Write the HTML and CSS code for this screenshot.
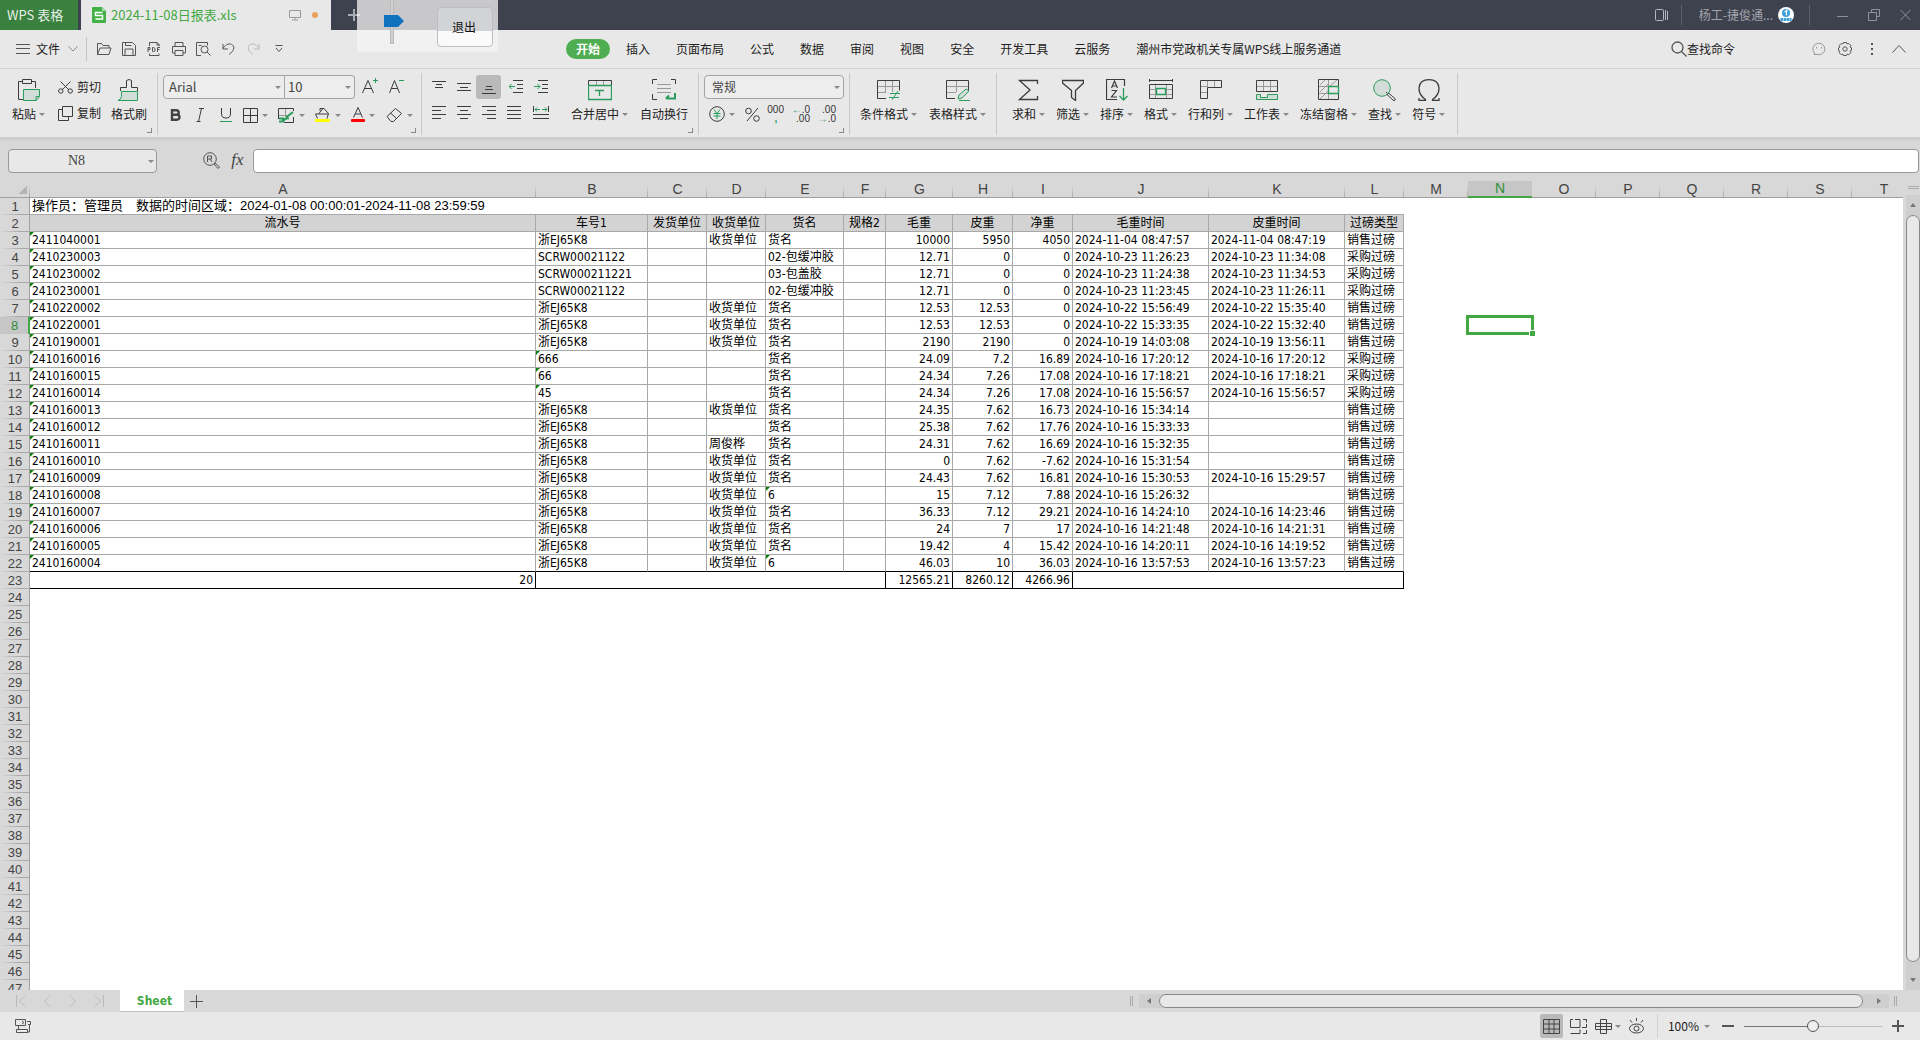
FILE: index.html
```
<!DOCTYPE html>
<html lang="zh-CN">
<head>
<meta charset="utf-8">
<title>2024-11-08日报表.xls - WPS 表格</title>
<link rel="stylesheet" href="styles.css">
</head>
<body>
<header class="titlebar">
  <button class="home-tab">WPS 表格</button>
  <div class="doc-tab">
    <svg class="doc-logo" width="14" height="16" viewBox="0 0 14 16"><path d="M1 0h9l4 4v11a1 1 0 0 1-1 1H1a1 1 0 0 1-1-1V1a1 1 0 0 1 1-1z" fill="#43b244"/><path d="M10 0l4 4h-4z" fill="#a5dba5"/><path d="M10.500 5.500h-7v3h7v3.500h-7" fill="none" stroke="#fff" stroke-width="1.500"/></svg>
    <span class="doc-name">2024-11-08日报表.xls</span>
    <svg width="12" height="12" viewBox="0 0 12 12" fill="none" stroke="#999"><path d="M.5 1.500h11v7H.5zM6 8.500v2M3 11h6"/></svg>
    <span class="unsaved"></span>
  </div>
  <button class="new-tab" aria-label="新建"><svg width="12" height="12" viewBox="0 0 12 12" stroke="#a9abb2" stroke-width="2"><path d="M6 0v12M0 6h12"/></svg></button>
  <div class="window-tools">
    <button aria-label="窗口布局"><svg width="14" height="12" viewBox="0 0 14 12" fill="none" stroke="#b5b7bd"><rect x=".5" y=".5" width="8" height="11" rx="1"/><path d="M10.500 1v10M12.500 2v9"/></svg></button>
    <i class="bar"></i>
    <a class="user" href="#">杨工-捷俊通...</a>
    <svg width="16" height="16" viewBox="0 0 16 16"><circle cx="8" cy="8" r="8" fill="#fff"/><circle cx="8" cy="6" r="4" fill="#3a9fd8"/><path d="M8.500 2.500v6M6.500 5l3-1.500" stroke="#fff" stroke-width="1.200"/><path d="M2.500 12.500h11" stroke="#3a9fd8" stroke-width="3" stroke-dasharray="2.500 .5"/></svg>
    <i class="bar bar-wide"></i>
    <button aria-label="最小化"><svg width="11" height="12" viewBox="0 0 11 12" stroke="#8f929b"><path d="M0 7.500h11"/></svg></button>
    <button aria-label="还原"><svg width="12" height="12" viewBox="0 0 12 12" fill="none" stroke="#8f929b"><path d="M.5 3.500h8v8h-8zM3.500 3V.5h8v7H9"/></svg></button>
    <button aria-label="关闭"><svg width="11" height="12" viewBox="0 0 11 12" stroke="#8f929b"><path d="M.5 1l10 10M10.500 1l-10 10"/></svg></button>
  </div>
</header>

<aside class="float-panel">
  <i class="float-track"></i>
  <svg class="float-thumb" width="20" height="12" viewBox="0 0 20 12"><path d="M0 0h14l6 6-6 6H0z" fill="#1071bd"/></svg>
  <button class="float-exit">退出</button>
</aside>

<nav class="menubar">
  <button class="file-menu"><svg width="14" height="10" viewBox="0 0 14 10" stroke="#555"><path d="M0 .5h14M0 4.500h14M0 9.500h14"/></svg>文件<svg class="chev" width="10" height="6" viewBox="0 0 10 6" fill="none" stroke="#888"><path d="M.5.5L5 5 9.500.5"/></svg></button>
  <div class="quick">
    <button aria-label="打开"><svg width="16" height="14" viewBox="0 0 16 14"><path d="M1.500 12.500v-11h4l1.500 2h6v2.500M1.500 12.500L4 6h11l-2 6.500z"/></svg></button>
    <button aria-label="保存"><svg width="14" height="14" viewBox="0 0 14 14"><path d="M.5.5h10l3 3v10H.5zM3 13V7h8v6M3.500.5v3h6"/></svg></button>
    <button aria-label="输出为PDF"><svg width="14" height="14" viewBox="0 0 14 14"><path d="M2.500 4V.5h7.500l2 2V4M10 .5V3h2.500M2.500 11.500v2h9.500v-2"/><path d="M1 10V5.500h2v2H1M5.500 5.500h1L8 6.500V9l-1.500.5h-1zM10.500 10V5.500H13M10.500 7.500h2"/></svg></button>
    <button aria-label="打印"><svg width="14" height="14" viewBox="0 0 14 14"><path d="M3 4.500v-4h8v4M3 11H.5V4.500h13V11H11M3 8.500h8v5H3z"/></svg></button>
    <button aria-label="打印预览"><svg width="15" height="14" viewBox="0 0 15 14"><path d="M5 13.500H.5V.5h11v3M2.500 3.500h3"/><circle cx="8.500" cy="7.500" r="3.500"/><path d="M11 10l3.500 3.500"/></svg></button>
    <button aria-label="撤销"><svg width="13" height="14" viewBox="0 0 13 14"><path d="M1 2v5h5M1 6.500C4 1.500 8 1 10.500 3s1.500 6-3.500 9.500"/></svg></button>
    <button aria-label="恢复" class="faded"><svg width="13" height="14" viewBox="0 0 13 14"><path d="M12 2v5H7M12 6.500C9 1.500 5 1 2.500 3S1 9 6 12.500"/></svg></button>
    <button aria-label="更多"><svg width="8" height="8" viewBox="0 0 8 8"><path d="M.5.500h7M1 3l3 3.500L7 3"/></svg></button>
  </div>
  <div class="tabs">
    <button class="on">开始</button><button>插入</button><button>页面布局</button><button>公式</button><button>数据</button><button>审阅</button><button>视图</button><button>安全</button><button>开发工具</button><button>云服务</button><button>潮州市党政机关专属WPS线上服务通道</button>
  </div>
  <div class="menu-right">
    <button class="find-cmd"><svg width="16" height="16" viewBox="0 0 16 16" fill="none" stroke="#555" stroke-width="1.300"><circle cx="6.500" cy="6.500" r="5.500"/><path d="M10.500 10.500l5 5"/></svg>查找命令</button>
    <button aria-label="反馈"><svg width="14" height="14" viewBox="0 0 14 14" fill="none" stroke="#999"><path d="M2 12.500L2.500 11A6 5.800 0 1 1 5 12.500z"/><path d="M4.500 5v1.500M9.500 5v1.500"/></svg></button>
    <button aria-label="设置"><svg width="16" height="16" viewBox="0 0 16 16" fill="none" stroke="#555"><circle cx="8" cy="8" r="2.200"/><path d="M6.500 1.500h3l.6 1.500 1.700-.5 2 2-.7 1.600 1.400.7v2.500l-1.400.7.7 1.700-2 2-1.700-.6-.6 1.400h-3l-.6-1.400-1.700.6-2-2 .7-1.700L1.500 9.300V6.800l1.400-.7-.7-1.600 2-2 1.700.5z"/></svg></button>
    <button aria-label="更多选项"><svg width="2" height="12" viewBox="0 0 2 12" fill="#555"><path d="M0 0h2v2H0zM0 5h2v2H0zM0 10h2v2H0z"/></svg></button>
    <button aria-label="收起功能区"><svg width="14" height="8" viewBox="0 0 14 8" fill="none" stroke="#555"><path d="M.5 7.500l6.500-7 6.500 7"/></svg></button>
  </div>
</nav>

<section class="ribbon">
  <div class="group g-clip">
    <button class="big"><svg width="22" height="22" viewBox="0 0 22 22"><path class="k" d="M4 2.500H.5v18H5M14 2.500h3.500V9M4.500.5h9v4h-9z"/><path class="gf" d="M5.500 10.500h16v7l-3 4h-13z"/><path class="g" d="M21 17.500h-3V21"/></svg><span>粘贴<i class="caret"></i></span></button>
    <div class="pair">
      <button><svg width="15" height="13" viewBox="0 0 15 13"><path class="k" d="M2.500.5L11 9M12.500.5L4 9"/><circle class="k" cx="2.800" cy="10" r="2.200"/><circle class="k" cx="12.200" cy="10" r="2.200"/></svg>剪切</button>
      <button><svg width="15" height="15" viewBox="0 0 15 15"><path class="k" d="M4.500.5h10v10h-10zM4 3.500H.5v11h10V11"/></svg>复制</button>
    </div>
    <button class="big"><svg width="22" height="22" viewBox="0 0 22 22"><path class="k" d="M2.500 12V8.500h6V1.500q2.500-2 5 0v7h6V12"/><path class="gf" d="M3.500 12.500h16v9H0q3-1 3.500-4z"/></svg><span>格式刷</span></button>
    <i class="corner"></i>
  </div>
  <div class="group g-font">
    <div class="line">
      <label class="pick pick-font"><select aria-label="字体"><option>Arial</option></select><i class="caret"></i></label><label class="pick pick-size"><select aria-label="字号"><option>10</option></select><i class="caret"></i></label>
      <button class="grow" aria-label="增大字号"><svg width="17" height="16" viewBox="0 0 17 16"><path class="k" d="M.5 15L6 2.500 11.500 15M2.500 10.500h7"/><path class="g" d="M13.500 0v5M11 2.500h5"/></svg></button>
      <button class="shrink" aria-label="减小字号"><svg width="16" height="16" viewBox="0 0 16 16"><path class="k" d="M.5 15L5.500 2.500 10.500 15M2 10.500h7"/><path class="g" d="M10 2.500h5"/></svg></button>
    </div>
    <div class="line fmt">
      <button class="b" aria-label="加粗"><svg width="11" height="12" viewBox="0 0 11 12"><path d="M2 1.200h4.500a2 2 0 0 1 0 4.500H2zM2 5.700h5a2.500 2.500 0 0 1 0 5H2z" fill="none" stroke="#444" stroke-width="2.400"/></svg></button>
      <button class="b" aria-label="倾斜"><svg width="9" height="14" viewBox="0 0 9 14"><path class="k" d="M3 .5h5M.5 13.500h4M5.500.5l-3 13"/></svg></button>
      <button class="b" aria-label="下划线"><svg width="12" height="14" viewBox="0 0 12 14"><path class="k" d="M1.500 0v6q0 4 4.500 4t4.500-4V0"/><path class="g" d="M0 13.500h12"/></svg></button>
      <button class="d" aria-label="边框"><svg width="15" height="15" viewBox="0 0 15 15"><path class="k" d="M.5.5h14v14H.5zM7.500.5v14M.5 7.500h14"/></svg><i class="caret"></i></button>
      <button class="d" aria-label="单元格样式"><svg width="17" height="15" viewBox="0 0 17 15"><path class="l" d="M1 7.500h9M7.500 1v8"/><path class="k" d="M.5 11V.5h15V3M15.500 9v5.500H6"/><path class="g" d="M1 10.500h4v3.500M8 9.500L15 4M1 13.500h4q2-4 6-3" stroke-width="2"/></svg><i class="caret"></i></button>
      <button class="d" aria-label="填充颜色"><svg width="17" height="16" viewBox="0 0 17 16"><path class="k" d="M3.500 11.500L1.500 7h3l5-6 5 5.500-1.500 5M4.500 7h10M6 4V1.500h3.500"/><rect x="1" y="12" width="15" height="3" rx="1" fill="#ff0"/></svg><i class="caret"></i></button>
      <button class="d" aria-label="字体颜色"><svg width="14" height="16" viewBox="0 0 14 16"><path class="k" d="M2.500 10.500L7 .5l4.500 10M4 7h6"/><rect y="12" width="14" height="3" rx="1" fill="#f00"/></svg><i class="caret"></i></button>
      <button class="d" aria-label="清除"><svg width="17" height="14" viewBox="0 0 17 14"><path class="k" d="M1 8.500L9.500.5l6 5-8 8H5zM4.500 5l6 5.500"/></svg><i class="caret"></i></button>
    </div>
    <i class="corner"></i>
  </div>
  <div class="group g-align">
    <div class="aligns">
      <button aria-label="顶端对齐"><svg width="14" height="14" viewBox="0 0 14 14"><path class="k" d="M0 1.500h14M4 4.500h6M3 7.500h8"/></svg></button>
      <button aria-label="垂直居中"><svg width="14" height="14" viewBox="0 0 14 14"><path class="k" d="M0 3.500h14M3 7.500h8M0 10.500h14"/></svg></button>
      <button class="held" aria-label="底端对齐"><svg width="14" height="14" viewBox="0 0 14 14"><path class="k" d="M4 6.500h6M3 9.500h8M0 13.500h14"/></svg></button>
      <button aria-label="减少缩进"><svg width="14" height="14" viewBox="0 0 14 14"><path class="k" d="M4 .5h10M8 4.500h6M8 8.500h6M4 12.500h10"/><path class="g" d="M0 6.500h6M2.500 4L0 6.500 2.500 9"/></svg></button>
      <button aria-label="增加缩进"><svg width="14" height="14" viewBox="0 0 14 14"><path class="k" d="M4 .5h10M8 4.500h6M8 8.500h6M4 12.500h10"/><path class="g" d="M0 6.500h6M3.500 4L6 6.500 3.500 9"/></svg></button>
      <button aria-label="左对齐"><svg width="14" height="14" viewBox="0 0 14 14"><path class="k" d="M0 .5h14M0 4.500h9M0 8.500h14M0 12.500h9"/></svg></button>
      <button aria-label="水平居中"><svg width="14" height="14" viewBox="0 0 14 14"><path class="k" d="M0 .5h14M3 4.500h8M0 8.500h14M3 12.500h8"/></svg></button>
      <button aria-label="右对齐"><svg width="14" height="14" viewBox="0 0 14 14"><path class="k" d="M0 .5h14M5 4.500h9M0 8.500h14M5 12.500h9"/></svg></button>
      <button aria-label="两端对齐"><svg width="14" height="14" viewBox="0 0 14 14"><path class="k" d="M0 .5h14M0 4.500h14M0 8.500h14M0 12.500h14"/></svg></button>
      <button aria-label="分散对齐"><svg width="16" height="14" viewBox="0 0 16 14"><path class="k" d="M.5 0v6M15.500 0v6M0 8.500h16M0 12.500h16"/><path class="g" d="M2 3.500h5M9 3.500h5M4 1.500l-2 2 2 2M12 1.500l2 2-2 2"/></svg></button>
    </div>
    <button class="big"><svg width="24" height="22" viewBox="0 0 24 22"><path class="l" d="M8.500 1v5M15.500 1v5"/><path class="k" d="M.5 6V1.500h23V6"/><path class="g" d="M.5 6.500h23v14H.5zM7 11.500h9M11.500 11.500V17" stroke-width="1.300"/></svg><span>合并居中<i class="caret"></i></span></button>
    <button class="big"><svg width="24" height="22" viewBox="0 0 24 22"><path class="l" d="M5 5.500h14M5 9.500h14M5 13.500h14"/><path class="k" d="M.5 5V.500H5M19 .5h4.500V5M.5 15v5.500H5"/><path class="g" d="M23 14v5.500h-9M17 16.500l-3 3" stroke-width="2"/></svg><span>自动换行</span></button>
    <i class="corner"></i>
  </div>
  <div class="group g-num">
    <label class="pick pick-num"><select aria-label="数字格式"><option>常规</option></select><i class="caret"></i></label>
    <div class="nums">
      <button class="d" aria-label="货币"><svg width="16" height="16" viewBox="0 0 16 16"><circle class="k" cx="8" cy="8" r="7.300"/><path class="g" d="M5 3.500L8 7.500l3-4M8 7.500V13M4.500 7.500h7M4.500 10h7"/></svg><i class="caret"></i></button>
      <button aria-label="百分比"><svg width="15" height="15" viewBox="0 0 15 15"><path class="k" d="M13 1L2 14"/><circle class="k" cx="3.500" cy="4" r="2.800"/><circle class="k" cx="11.500" cy="11.500" r="2.800"/></svg></button>
      <button class="mini" aria-label="千位分隔"><span>000</span><span class="gr">,</span></button>
      <button class="mini" aria-label="增加小数位"><span><b>←</b>.0</span><span>.00</span></button>
      <button class="mini" aria-label="减少小数位"><span>.00</span><span><b>→</b>.0</span></button>
    </div>
    <i class="corner"></i>
  </div>
  <div class="group g-style">
    <button class="big"><svg width="24" height="22" viewBox="0 0 24 22"><path class="l" d="M1 7.500h21M8.500 1v12M15.500 1v12M1 13.500h8"/><path class="k" d="M9 19.500H.5v-18h22v10"/><path class="g" d="M13 14.500h10M12 18.500h10M21 12l-6 9"/></svg><span>条件格式<i class="caret"></i></span></button>
    <button class="big"><svg width="24" height="22" viewBox="0 0 24 22"><path class="l" d="M1 7.500h21M10.500 1v12M1 13.500h9"/><path class="k" d="M9 19.500H.5v-18h22v10"/><path class="gf" d="M12 20l1-4 7-6 3 2-7 7z"/><path class="g" d="M13 21.500h11"/></svg><span>表格样式<i class="caret"></i></span></button>
  </div>
  <div class="group g-edit">
    <button class="big"><svg width="22" height="22" viewBox="0 0 22 22"><path class="k" d="M19.500 5V1.500h-18L12 11 1.500 20.500h18V17" stroke-width="1.300"/></svg><span>求和<i class="caret"></i></span></button>
    <button class="big"><svg width="22" height="22" viewBox="0 0 22 22"><path class="k" d="M.5 1.500h21V4l-8 7.500v10l-4-3v-7L.5 4z" stroke-width="1.300"/></svg><span>筛选<i class="caret"></i></span></button>
    <button class="big"><svg width="22" height="22" viewBox="0 0 22 22"><path class="k" d="M18.500 7V.500H.5v20H11M5.500 9l3-7 3 7M6.500 7h4M5.500 11.500h5L5.500 18H11" stroke-width="1.200"/><path class="g" d="M17.500 9v12M13.500 17l4 4 4-4" stroke-width="1.300"/></svg><span>排序<i class="caret"></i></span></button>
    <button class="big"><svg width="24" height="22" viewBox="0 0 24 22"><path class="l" d="M6.500 5v15M17.500 5v15M1 10.500h22M1 15.500h22"/><path class="k" d="M.5 0v3M23.500 0v3M0 1.500h24M.5 5.500h23v14H.5z"/><path class="g box" d="M7.500 9.500h9v6h-9z" stroke-width="1.400"/></svg><span>格式<i class="caret"></i></span></button>
    <button class="big"><svg width="22" height="22" viewBox="0 0 22 22"><path class="l" d="M7.500 1v7M14.500 1v7M1 7.500h7M1 13.500h7"/><path class="k" d="M.5 1.500h21v7h-14v11h-7z"/></svg><span>行和列<i class="caret"></i></span></button>
    <button class="big"><svg width="24" height="22" viewBox="0 0 24 22"><path class="l" d="M8.500 1v11M15.500 1v11M1 7.500h22"/><path class="k" d="M1.500 1.500h21v11h-21z"/><path class="gf" d="M1.500 15.500h4v3h7v-3h10v5h-21z"/></svg><span>工作表<i class="caret"></i></span></button>
    <button class="big"><svg width="22" height="22" viewBox="0 0 22 22"><path class="l" d="M10.500 1v19M1 7.500h20M1 14.500h20M2 6l5-5M2 13l8-8M2 20l8-8M12 7l7-6"/><path class="k" d="M.5.500h20v20H.5z"/><path class="g box" d="M10.500 7.500h10v7h-10z" stroke-width="1.300"/></svg><span>冻结窗格<i class="caret"></i></span></button>
    <button class="big"><svg width="24" height="22" viewBox="0 0 24 22"><circle class="gf" cx="9" cy="9" r="8.300"/><path class="k" d="M14 15.500l1.500-1.500 7 6-1.500 2zM14 14l-1-1"/></svg><span>查找<i class="caret"></i></span></button>
    <button class="big"><svg width="22" height="22" viewBox="0 0 22 22"><path class="k" d="M1 19v2.500h6.500v-1C-2 14-1 .700 11 .700S24 14 14.500 20.500v1H21V19" stroke-width="1.300"/></svg><span>符号<i class="caret"></i></span></button>
  </div>
</section>

<section class="formula">
  <div class="namebox"><input aria-label="名称框" value="N8"><i class="caret"></i></div>
  <button aria-label="查找公式"><svg width="17" height="17" viewBox="0 0 17 17" fill="none" stroke="#555"><circle cx="7" cy="7" r="6.300"/><path d="M4.500 10V4h4v3h-4M7 7l2 3M11 12l1-1 4.500 4-1.500 1.500z"/></svg></button>
  <button class="fx" aria-label="插入函数">fx</button>
  <input class="entry" aria-label="编辑栏">
</section>

<main class="sheet">
  <div class="grid-wrap"><table id="grid"></table></div>
  <div class="vscroll"><i class="vsplit"></i><div class="vtrack"><i class="tri up"></i><i class="vthumb"></i><i class="tri down"></i></div></div>
</main>

<footer class="sheetbar">
  <div class="navs">
    <button aria-label="第一个"><svg width="10" height="12" viewBox="0 0 10 12"><path d="M.5 0v12M9 .5L3.500 6 9 11.500"/></svg></button>
    <button aria-label="上一个"><svg width="10" height="12" viewBox="0 0 10 12"><path d="M8 .5L2.500 6 8 11.500"/></svg></button>
    <button aria-label="下一个"><svg width="10" height="12" viewBox="0 0 10 12"><path d="M2 .5L7.500 6 2 11.500"/></svg></button>
    <button aria-label="最后一个"><svg width="10" height="12" viewBox="0 0 10 12"><path d="M9.500 0v12M1 .5L6.500 6 1 11.500"/></svg></button>
  </div>
  <button class="sheet-tab">Sheet</button>
  <button class="add-sheet" aria-label="新建工作表"><svg width="13" height="13" viewBox="0 0 13 13" stroke="#555"><path d="M6.500 0v13M0 6.500h13"/></svg></button>
  <div class="hscroll"><i class="grip"></i><div class="htrack"><i class="tri left"></i><i class="hthumb"></i><i class="tri right"></i></div><i class="grip"></i></div>
</footer>

<footer class="status">
  <button aria-label="状态"><svg width="17" height="16" viewBox="0 0 17 16" fill="none" stroke="#555"><path d="M.5 1.500h10v6H.5zM3.500 8v3M1.500 11.500h11v3h-11zM12 3.500h3.500v3H13M14.500 7v7H12M7 3l2 1.500L7 6"/></svg></button>
  <div class="views">
    <button class="held" aria-label="普通视图"><svg width="17" height="15" viewBox="0 0 17 15"><path d="M.5.500h16v14H.5zM6 .5v14M11 .5v14M.5 5h16M.5 10h16"/></svg></button>
    <button aria-label="分页预览"><svg width="17" height="15" viewBox="0 0 17 15"><path d="M3 .5H.500v8h9.500V.5H5M13 .5h3.500v3M16.500 5v3.500H12M16.500 11v3.500H13M.5 14.500H10V10.500"/></svg></button>
    <button class="d" aria-label="页面布局视图"><svg width="17" height="15" viewBox="0 0 17 15"><path d="M5.500.5h6v14h-6zM.5 4.500h16v6H.5zM.5 7.500h16"/></svg><i class="caret"></i></button>
    <button aria-label="护眼模式"><svg width="17" height="16" viewBox="0 0 17 16"><ellipse cx="8.500" cy="10.500" rx="7" ry="4.500"/><circle cx="8.500" cy="10.500" r="2.500"/><path d="M8.500 0v3M2 2l2 2.500M15 2l-2 2.500"/></svg></button>
  </div>
  <button class="zoom">100%<i class="caret"></i></button>
  <button class="step" aria-label="缩小"><svg width="12" height="12" viewBox="0 0 12 12" stroke="#555" stroke-width="2"><path d="M0 6h12"/></svg></button>
  <input class="zoombar" type="range" min="0" max="100" value="50" aria-label="缩放">
  <button class="step" aria-label="放大"><svg width="12" height="12" viewBox="0 0 12 12" stroke="#555" stroke-width="2"><path d="M0 6h12M6 0v12"/></svg></button>
</footer>
<script src="sheet.js"></script>
</body>
</html>
```
FILE: styles.css
```
* { box-sizing: border-box; }
body {
  margin: 0; height: 100vh; overflow: hidden; display: flex; flex-direction: column;
  background: #e8e8e8; color: #222; font: 12px/16px "Noto Sans CJK SC", "Noto Sans", sans-serif;
}
button, input, select { font: inherit; color: inherit; background: none; border: 0; padding: 0; margin: 0; }
button { display: flex; align-items: center; justify-content: center; white-space: nowrap; flex: none; }
svg { display: block; flex: none; }
i { display: block; flex: none; }
a { color: inherit; text-decoration: none; }
.caret { width: 0; height: 0; border: 3px solid transparent; border-top: 3px solid #888; border-bottom: 0; }

.titlebar { height: 30px; flex: none; display: flex; background: #3e414e; }
.home-tab { width: 78px; background: #3a803f; color: #e6f0e6; font-size: 13px; justify-content: flex-start; padding-left: 7px; margin-right: 3px; }
.doc-tab { width: 250px; background: #e8e8e8; display: flex; align-items: center; padding: 0 13px 0 11px; }
.doc-name { flex: 1; margin-left: 5px; color: #43a843; font-size: 13px; }
.unsaved { width: 6px; height: 6px; border-radius: 3px; background: #e9a15a; margin-left: 11px; }
.new-tab { width: 44px; padding-left: 1px; }
.window-tools { margin-left: auto; display: flex; align-items: center; padding-right: 9px; }
.window-tools button { height: 30px; }
.window-tools button + button { margin-left: 20px; }
.bar { width: 1px; height: 20px; background: #5d606b; margin: 0 17px 0 12px; }
.bar-wide { margin: 0 27px 0 15px; }
.user { color: #a3a5ac; margin-right: 5px; }

.float-panel { position: absolute; left: 357px; top: 0; width: 141px; height: 52px; background: #f3f3f3c2; }
.float-track { position: absolute; left: 33px; top: 0; width: 4px; height: 44px; border: 1px solid #bbb; border-top: 0; background: #d0d0d0; }
.float-thumb { position: absolute; left: 27px; top: 15px; }
.float-exit { position: absolute; left: 80px; top: 7px; width: 56px; height: 40px; border: 1px solid #bdbec0; border-radius: 4px; background: linear-gradient(#d2d3d5 23px, #fafafa 23px); color: #111; padding-right: 2px; }

.menubar { height: 39px; flex: none; display: flex; align-items: center; border-bottom: 1px solid #d4d4d4; padding: 0 14px 0 16px; }
.file-menu { height: 24px; gap: 6px; padding-right: 8px; border-right: 1px solid #c4c4c4; }
.chev { margin-left: 2px; }
.quick { display: flex; margin-left: 4px; width: 205px; }
.quick button { width: 25px; height: 24px; }
.quick svg { fill: none; stroke: #555; }
.quick .faded svg { stroke: #b8b8b8; }
.tabs { display: flex; align-items: center; gap: 6px; margin-left: 270px; }
.tabs button { height: 20px; padding: 0 10px; border-radius: 10px; }
.tabs .on { background: #4fae52; color: #fff; font-weight: bold; }
.menu-right { margin-left: auto; display: flex; align-items: center; }
.find-cmd { margin-right: 77px; }
.menu-right button:nth-child(3) { margin: 0 18px 0 11px; }
.menu-right button:last-child { margin-left: 19px; }

.ribbon { height: 68px; flex: none; display: flex; padding-top: 4px; }
.ribbon .k { fill: none; stroke: #3c3c3c; }
.ribbon .l { fill: none; stroke: #999; }
.ribbon .g { fill: none; stroke: #2a9c5c; }
.ribbon .gf { fill: #d3ddd7; stroke: #2a9c5c; }
.ribbon .box { fill: #e8e8e8; }
.group { position: relative; height: 62px; border-right: 1px solid #c8c8c8; display: flex; flex: none; }
.corner { position: absolute; right: 5px; bottom: 2px; width: 5px; height: 5px; border: solid #888; border-width: 0 1px 1px 0; }
.big { flex-direction: column; justify-content: flex-start; padding-top: 6px; gap: 5px; height: 56px; }
.big span { display: flex; align-items: center; gap: 3px; line-height: 16px; }
.g-clip { width: 158px; padding-left: 12px; }
.pair { width: 54px; margin: 6px 0 0 12px; display: flex; flex-direction: column; gap: 10px; padding-left: 1px; }
.pair button { height: 16px; gap: 4px; justify-content: flex-start; }
.g-font { width: 264px; padding-left: 5px; flex-direction: column; }
.line { display: flex; align-items: center; }
.pick { display: flex; align-items: center; height: 24px; margin-top: 2px; border: 1px solid #a4a4a4; border-radius: 4px; background: #ededed; padding: 0 3px 0 5px; }
.pick select { appearance: none; flex: 1; min-width: 0; outline: none; color: #444; }
.pick-font { width: 122px; border-radius: 4px 0 0 4px; }
.pick-size { width: 70px; border-radius: 0 4px 4px 0; border-left: 0; padding-left: 3px; }
.pick-font select, .pick-size select { font-size: 13px; }
.grow { margin-left: 7px; }
.shrink { margin-left: 10px; }
.fmt { height: 24px; margin-top: 4px; }
.fmt .b { width: 25px; }
.d { gap: 4px; }
.fmt .d { width: 36px; }
.fmt .b + .d { margin-left: -1px; }
.g-align { width: 277px; padding-left: 4px; }
.aligns { display: grid; grid-template-columns: repeat(5, 25px); grid-template-rows: 24px 24px; row-gap: 2px; align-content: start; margin-top: 2px; width: 132px; }
.aligns button:nth-child(5n+4) { padding-left: 5px; }
.aligns button:nth-child(5n) { padding-left: 5px; }
.aligns button:nth-child(9) { padding-left: 0; }
.aligns .held { background: #b9b9b9; border-radius: 3px; }
.g-align .big { margin-left: 13px; }
.g-align .big + .big { margin-left: 12px; }
.g-num { width: 151px; padding-left: 5px; flex-direction: column; }
.pick-num { width: 140px; padding-left: 7px; }
.nums { display: flex; align-items: center; height: 24px; margin: 3px 0 0 5px; }
.nums button:nth-child(2) { margin: 0 8px 0 10px; }
.mini { flex-direction: column; width: 16px; font: 10px/9px "Liberation Sans", sans-serif; color: #333; align-items: flex-end; }
.mini b { color: #2a9c5c; font-weight: normal; }
.mini .gr { align-self: center; color: #2a9c5c; font-weight: bold; }
.mini + .mini { margin-left: 10px; }
.g-style { width: 147px; padding-left: 10px; gap: 12px; }
.g-edit { width: 461px; padding-left: 15px; gap: 11px; }

.formula { height: 44px; flex: none; display: flex; align-items: flex-start; background: linear-gradient(#c8c8c8, #d8d8d8 5px); padding: 12px 1px 0 8px; }
.namebox { width: 149px; height: 24px; border: 1px solid #999; border-radius: 4px; background: #e8e8e8; display: flex; align-items: center; padding-right: 2px; }
.namebox input { flex: 1; min-width: 0; padding-right: 4px; text-align: center; font: 14px/20px "Liberation Serif", serif; color: #444; }
.formula button { height: 22px; margin-left: 46px; }
.formula .fx { margin-left: 9px; width: 17px; font: italic 17px/20px "Liberation Serif", serif; color: #444; }
.entry { flex: 1; height: 24px; margin-left: 7px; border: 1px solid #999; border-radius: 4px; background: #fff; padding: 0 6px; }

.sheet { flex: 1; min-height: 0; display: flex; background: #d8d8d8; }
.grid-wrap { flex: 1; min-width: 0; overflow: hidden; background: #fff; }
table { width: 100%; table-layout: fixed; border-collapse: separate; border-spacing: 0; font: 12px/16px "DejaVu Sans Condensed", "Noto Sans CJK SC", sans-serif; color: #000; }
tr { height: 17px; }
td, th { height: 17px; padding: 0 2px; overflow: hidden; white-space: nowrap; font-weight: normal; text-align: left; position: relative; }
.cols th { background: linear-gradient(#d8d8d8 4px, #a8a8a8) right / 1px 100% no-repeat #d8d8d8; border-bottom: 1px solid #a0a0a0; text-align: center; font: 14px/16px "Liberation Sans", sans-serif; color: #444; }
.cols .all { padding: 0 3px; }
.all i { width: 9px; height: 9px; margin-left: auto; background: linear-gradient(135deg, transparent 50%, #b4b4b4 50%); }
.cols .sel { background: #c6c6c6; color: #2f8f3a; border-bottom: 2px solid #43a843; line-height: 15px; }
tbody th { padding: 0 0 0 1px; background: linear-gradient(90deg, #d8d8d8, #a8a8a8 20px) bottom / 100% 1px no-repeat #d8d8d8; border-right: 1px solid #a0a0a0; text-align: center; font: 13px/16px "Liberation Sans", sans-serif; color: #444; }
tbody th.sel { background: #c6c6c6; color: #2f8f3a; border-right: 2px solid #43a843; }
td.c { border: solid #a8a8a8; border-width: 0 1px 1px 0; }
.note { font: 13px/16px "Liberation Sans", "Noto Sans CJK SC", sans-serif; }
td.top { border-bottom: 1px solid #a8a8a8; }
td.h { background: #d3d3d3; text-align: center; }
td.n { text-align: right; }
td.t::before { content: ""; position: absolute; left: 0; top: 0; border: 2px solid; border-color: #0a800a transparent transparent #0a800a; }
.last td.c { border-bottom-color: #000; }
.sum td.c { border-color: #000; }
td.cursor { overflow: visible; }
.cursor i { position: absolute; inset: -2px -2px -1px; border: 3px solid #43a843; }
.cursor i::after { content: ""; position: absolute; right: -4px; bottom: -4px; width: 5px; height: 5px; background: #43a843; outline: 1px solid #fff; }

.vscroll { width: 17px; display: flex; flex-direction: column; align-items: flex-end; }
.vsplit { width: 11px; height: 3px; margin: 5px 1px 6px 0; border: solid #aaa; border-width: 1px 0; }
.vtrack { flex: 1; width: 14px; background: #cfcfcf; display: flex; flex-direction: column; align-items: center; padding: 8px 0; }
.vthumb { flex: 1; width: 14px; margin: 8px 0 16px; border: 1px solid #888; border-radius: 7px; background: #e8e8e8; }
.tri { width: 0; height: 0; border: 3px solid transparent; }
.up { border-bottom: 4px solid #777; border-top: 0; }
.down { border-top: 4px solid #777; border-bottom: 0; }
.left { border-right: 4px solid #777; border-left: 0; }
.right { border-left: 4px solid #777; border-right: 0; }

.sheetbar { height: 22px; flex: none; display: flex; align-items: center; background: #d8d8d8; }
.navs { display: flex; gap: 16px; padding-left: 16px; width: 120px; }
.navs svg { fill: none; stroke: #bcbcbc; }
.sheet-tab { width: 64px; height: 22px; background: #fff; border-bottom: 1px solid #c0c0c0; color: #43a843; font: bold 12px/18px "DejaVu Sans Condensed", sans-serif; padding-left: 5px; }
.add-sheet { margin-left: 6px; }
.hscroll { flex: 1; display: flex; align-items: center; margin-left: 927px; padding-right: 23px; }
.htrack { flex: 1; height: 14px; background: #cfcfcf; display: flex; align-items: center; margin: 0 5px 0 6px; padding: 0 8px; }
.hthumb { flex: 1; height: 14px; margin: 0 14px 0 8px; border: 1px solid #888; border-radius: 7px; background: #e8e8e8; }
.grip { width: 3px; height: 10px; border: solid #aaa; border-width: 0 1px; }

.status { height: 28px; flex: none; display: flex; align-items: center; background: #e8e8e8; padding: 0 16px 0 15px; }
.status .views { margin-left: auto; display: flex; align-items: center; height: 24px; padding-right: 12px; border-right: 1px solid #d2d2d2; }
.views svg { fill: none; stroke: #444; }
.views button { height: 24px; }
.views .held { width: 23px; background: #b9b9b9; border-radius: 2px; margin-right: 7px; }
.views .d { margin: 0 7px 0 8px; }
.views .d { gap: 3px; }
.zoom { gap: 5px; margin: 0 12px 0 10px; }
.zoombar { appearance: none; width: 138px; height: 14px; margin: 0 10px; background: linear-gradient(90deg, #777 50%, #bbb 50%) center / 100% 1px no-repeat; }
.zoombar::-webkit-slider-thumb { appearance: none; width: 12px; height: 12px; border: 1px solid #555; border-radius: 6px; background: #eee; }
```
FILE: sheet.js
```
const widths = [30, 506, 112, 59, 59, 78, 42, 67, 60, 60, 136, 136, 59, 64, 64, 64, 64, 64, 64, 64, 64];
const letters = "ABCDEFGHIJKLMNOPQRST".split("");
const ROWS = 47;
const S = "销售过磅", B = "采购过磅", U = "收货单位", G = "货名", Z = "浙EJ65K8";
const head = ["流水号", "车号1", "发货单位", "收货单位", "货名", "规格2", "毛重", "皮重", "净重", "毛重时间", "皮重时间", "过磅类型"];
const data = [
  ["2411040001", Z, U, G, "10000", "5950", "4050", "2024-11-04 08:47:57", "2024-11-04 08:47:19", S],
  ["2410230003", "SCRW00021122", "", "02-包缓冲胶", "12.71", "0", "0", "2024-10-23 11:26:23", "2024-10-23 11:34:08", B],
  ["2410230002", "SCRW000211221", "", "03-包盖胶", "12.71", "0", "0", "2024-10-23 11:24:38", "2024-10-23 11:34:53", B],
  ["2410230001", "SCRW00021122", "", "02-包缓冲胶", "12.71", "0", "0", "2024-10-23 11:23:45", "2024-10-23 11:26:11", B],
  ["2410220002", Z, U, G, "12.53", "12.53", "0", "2024-10-22 15:56:49", "2024-10-22 15:35:40", S],
  ["2410220001", Z, U, G, "12.53", "12.53", "0", "2024-10-22 15:33:35", "2024-10-22 15:32:40", S],
  ["2410190001", Z, U, G, "2190", "2190", "0", "2024-10-19 14:03:08", "2024-10-19 13:56:11", S],
  ["2410160016", "666", "", G, "24.09", "7.2", "16.89", "2024-10-16 17:20:12", "2024-10-16 17:20:12", B],
  ["2410160015", "66", "", G, "24.34", "7.26", "17.08", "2024-10-16 17:18:21", "2024-10-16 17:18:21", B],
  ["2410160014", "45", "", G, "24.34", "7.26", "17.08", "2024-10-16 15:56:57", "2024-10-16 15:56:57", B],
  ["2410160013", Z, U, G, "24.35", "7.62", "16.73", "2024-10-16 15:34:14", "", S],
  ["2410160012", Z, "", G, "25.38", "7.62", "17.76", "2024-10-16 15:33:33", "", S],
  ["2410160011", Z, "周俊桦", G, "24.31", "7.62", "16.69", "2024-10-16 15:32:35", "", S],
  ["2410160010", Z, U, G, "0", "7.62", "-7.62", "2024-10-16 15:31:54", "", S],
  ["2410160009", Z, U, G, "24.43", "7.62", "16.81", "2024-10-16 15:30:53", "2024-10-16 15:29:57", S],
  ["2410160008", Z, U, "6", "15", "7.12", "7.88", "2024-10-16 15:26:32", "", S],
  ["2410160007", Z, U, G, "36.33", "7.12", "29.21", "2024-10-16 14:24:10", "2024-10-16 14:23:46", S],
  ["2410160006", Z, U, G, "24", "7", "17", "2024-10-16 14:21:48", "2024-10-16 14:21:31", S],
  ["2410160005", Z, U, G, "19.42", "4", "15.42", "2024-10-16 14:20:11", "2024-10-16 14:19:52", S],
  ["2410160004", Z, U, "6", "46.03", "10", "36.03", "2024-10-16 13:57:53", "2024-10-16 13:57:23", S]
];

const td = (cls, text, span) => `<td class="${cls}"${span ? ` colspan="${span}"` : ""}>${text}</td>`;

function dataRow(r) {
  // columns C and F hold no values in this report
  const full = [r[0], r[1], "", r[2], r[3], "", ...r.slice(4)];
  return full.map((v, i) => {
    let cls = "c";
    if (i >= 6 && i <= 8) cls += " n";
    else if (i < 6 && /^\d+$/.test(v)) cls += " t";
    return td(cls, v);
  }).join("");
}

let html = "<colgroup>" + widths.map(w => `<col style="width:${w}px">`).join("") + "<col></colgroup>";
html += '<thead><tr class="cols"><th class="all"><i></i></th>' +
  letters.map(l => `<th scope="col"${l === "N" ? ' class="sel"' : ""}>${l}</th>`).join("") + "</tr></thead><tbody>";
for (let n = 1; n <= ROWS; n++) {
  let cells = "", cls = "";
  if (n === 1) cells = td("note top", "操作员：管理员　数据的时间区域：2024-01-08 00:00:01-2024-11-08 23:59:59", 12);
  else if (n === 2) cells = head.map(h => td("c h", h)).join("");
  else if (n <= 22) { cells = dataRow(data[n - 3]); if (n === 22) cls = "last"; }
  else if (n === 23) {
    cls = "sum";
    cells = td("c n", "20") + td("c", "", 5) + td("c n", "12565.21") + td("c n", "8260.12") + td("c n", "4266.96") + td("c", "", 3);
  }
  if (n === 8) cells += td("", "") + td("cursor", "<i></i>");
  html += `<tr class="${cls}"><th scope="row"${n === 8 ? ' class="sel"' : ""}>${n}</th>${cells}</tr>`;
}
document.getElementById("grid").innerHTML = html + "</tbody>";
```
